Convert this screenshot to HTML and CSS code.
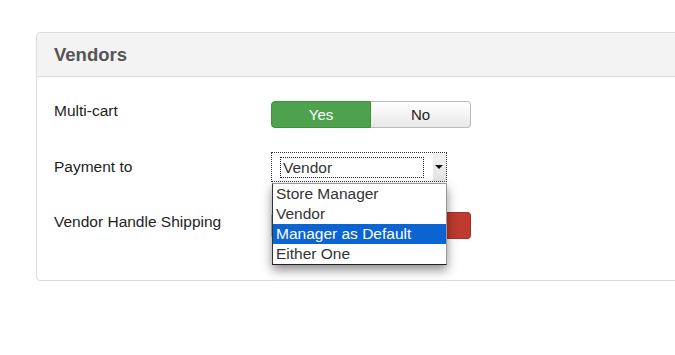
FILE: index.html
```html
<!DOCTYPE html>
<html lang="en">
<head>
    <meta charset="UTF-8">
    <meta name="viewport" content="width=device-width, initial-scale=1.0">
    <title>Vendors</title>
    <link rel="stylesheet" href="styles.css">
</head>
<body>

    <div class="panel">
        <div class="panel-header">
            <h3>Vendors</h3>
        </div>
        <div class="panel-body">
            <div class="form-row row-toggle">
                <label class="control-label">Multi-cart</label>
                <div class="btn-group">
                    <span class="btn btn-success">Yes</span>
                    <span class="btn">No</span>
                </div>
            </div>

            <div class="form-row row-select">
                <label class="control-label">Payment to</label>
                <div class="select-wrap">
                    <div class="select-box">
                        <span class="select-value">Vendor</span>
                        <span class="select-arrow"></span>
                    </div>
                    <ul class="select-menu">
                        <li>Store Manager</li>
                        <li>Vendor</li>
                        <li class="active">Manager as Default</li>
                        <li>Either One</li>
                    </ul>
                </div>
            </div>

            <div class="form-row row-toggle">
                <label class="control-label">Vendor Handle Shipping</label>
                <div class="btn-group">
                    <span class="btn">Yes</span>
                    <span class="btn btn-danger">No</span>
                </div>
            </div>
        </div>
    </div>

</body>
</html>
```

FILE: styles.css
```css
body {
    font-family: "Liberation Sans", Arial, sans-serif;
    font-size: 15.5px;
    color: #222;
    background-color: #fff;
    margin: 0;
    overflow: hidden;
}
.panel {
    width: 700px;
    margin: 32px 0 0 36px;
    border: 1px solid #dcdcdc;
    border-radius: 4px;
}
.panel-header {
    height: 43px;
    background-color: #f3f3f3;
    border-bottom: 1px solid #dcdcdc;
    border-radius: 4px 4px 0 0;
    padding-left: 17px;
}
.panel-header h3 {
    margin: 0;
    font-size: 18.5px;
    line-height: 43px;
    color: #555;
    font-weight: bold;
}
.panel-body {
    padding: 24px 17px 41px;
}
.form-row {
    display: flex;
}
.form-row + .form-row {
    margin-top: 24px;
}
.form-row.row-select + .form-row {
    margin-top: 30px;
}
.control-label {
    width: 217px;
    line-height: 20px;
    color: #1e1e1e;
}
.row-select .control-label {
    padding-top: 5px;
}

/* toggle buttons */
.btn-group {
    display: flex;
}
.btn {
    width: 98px;
    height: 25px;
    line-height: 25px;
    text-align: center;
    font-size: 15px;
    color: #222;
    background: linear-gradient(#ffffff, #e8e8e8);
    border: 1px solid #bcbcbc;
}
.btn:first-child {
    border-radius: 4px 0 0 4px;
}
.btn:last-child {
    border-left: none;
    width: 99px;
    border-radius: 0 4px 4px 0;
}
.btn-success {
    color: #fff;
    background: #4ea24e;
    border-color: #3f8f3f;
}
.btn-danger {
    color: #fff;
    background: #bf3a2f;
    border-color: #a8302a;
}

/* native-like select with open menu */
.select-wrap {
    position: relative;
}
.select-box {
    display: flex;
    width: 174px;
    height: 28px;
    border: 1px dotted #333;
    background-color: #fff;
}
.select-value {
    width: 141px;
    height: 19px;
    margin: 4px 0 0 8px;
    border: 1px dotted #222;
    font-size: 15.5px;
    line-height: 19px;
    padding-left: 2px;
    color: #333;
}
.select-arrow {
    position: relative;
    margin-left: 9px;
    width: 13px;
    background: linear-gradient(#f2f2f2, #e4e4e4);
}
.select-arrow::after {
    content: "";
    position: absolute;
    left: 2px;
    top: 12px;
    border-left: 4px solid transparent;
    border-right: 4px solid transparent;
    border-top: 4px solid #111;
}
.select-menu {
    position: absolute;
    left: 1px;
    top: 31px;
    width: 173px;
    margin: 0;
    padding: 0;
    list-style: none;
    background-color: #fff;
    border: 1px solid #999;
    border-left-color: #333;
    border-bottom-color: #222;
    box-shadow: 0 5px 10px rgba(0, 0, 0, 0.45);
    z-index: 2;
}
.select-menu li {
    height: 20px;
    line-height: 20px;
    font-size: 15.5px;
    padding-left: 3px;
    color: #333;
}
.select-menu li.active {
    background-color: #0b64d2;
    color: #fff;
}
```
